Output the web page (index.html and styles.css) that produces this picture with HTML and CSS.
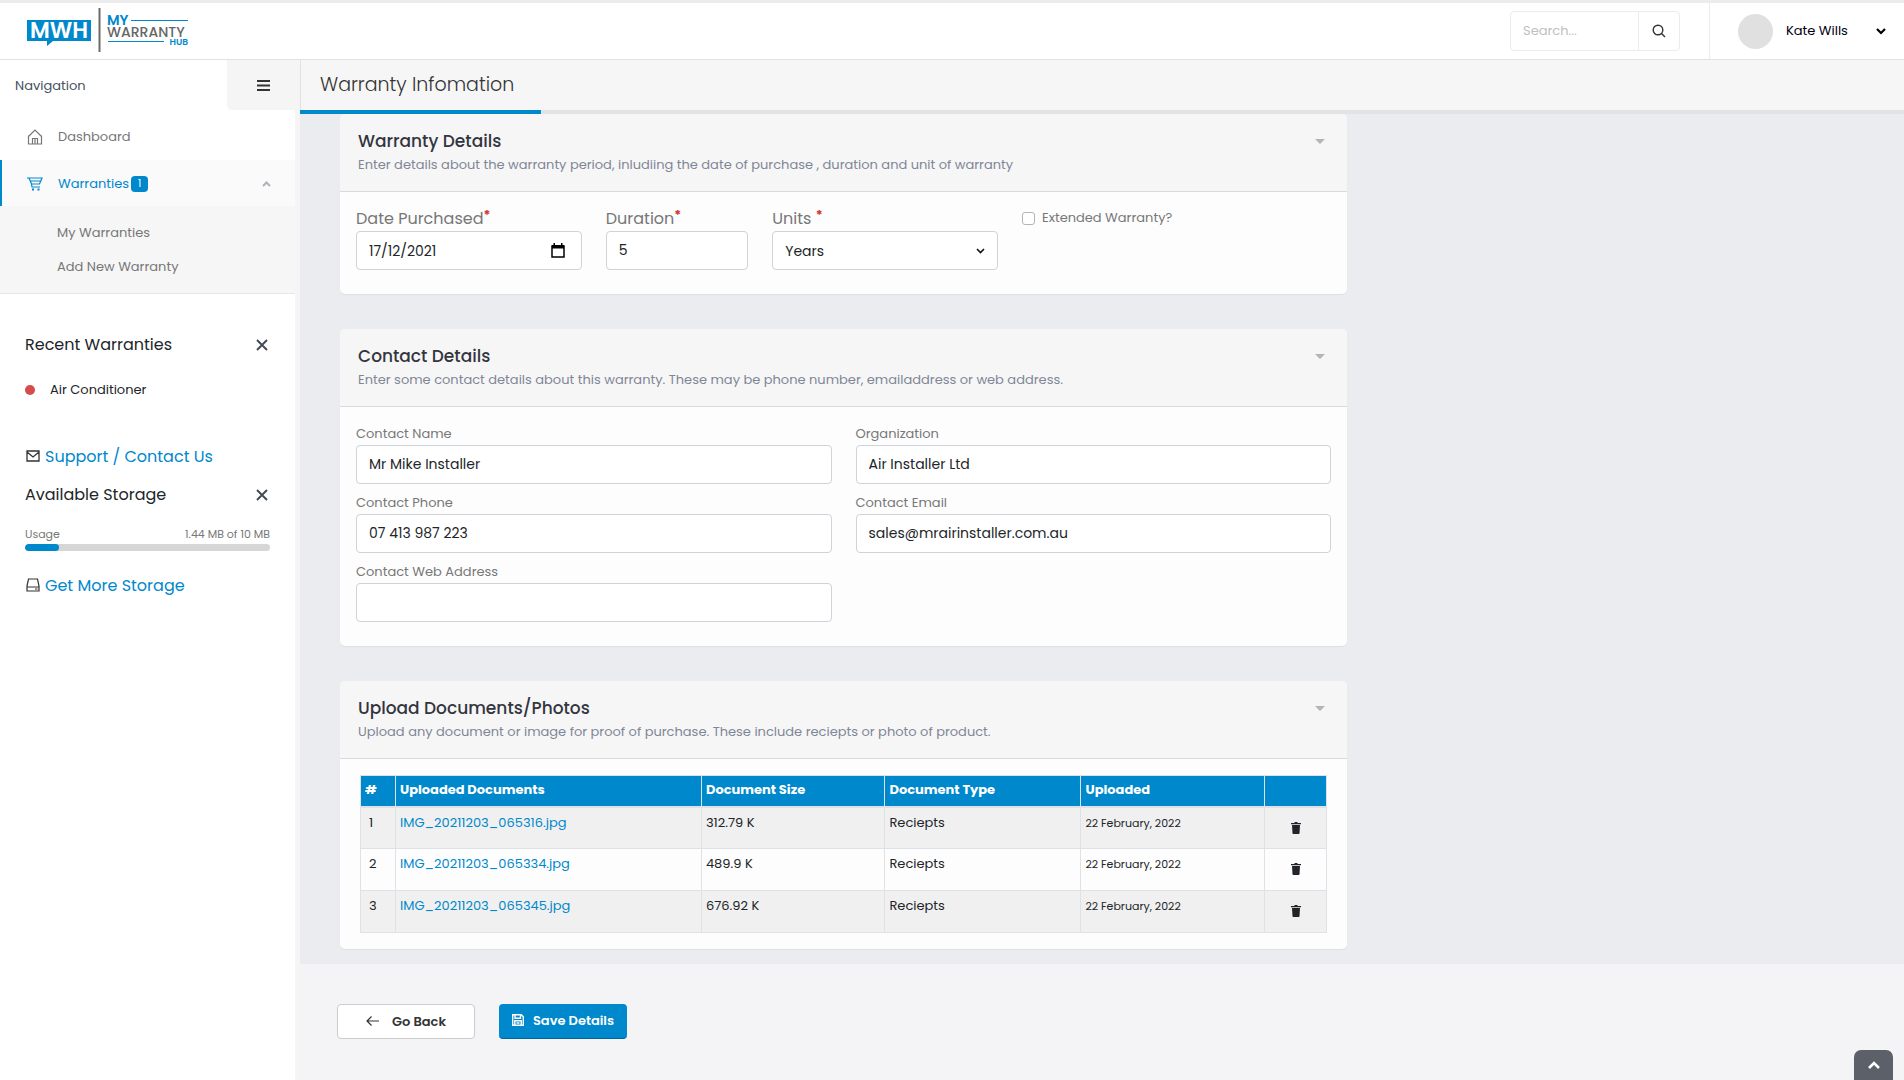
FILE: index.html
```html
<!DOCTYPE html>
<html lang="en-AU">
<head>
<meta charset="utf-8">
<title>Warranty Infomation - My Warranty Hub</title>
<meta name="viewport" content="width=device-width, initial-scale=1">
<link rel="stylesheet" href="styles.css">
</head>
<body>
<svg class="sprite" aria-hidden="true">
  <symbol id="i-close" viewBox="0 0 12 12"><path d="M1 1l10 10M11 1L1 11" fill="none" stroke="currentColor" stroke-width="2"/></symbol>
  <symbol id="i-trash" viewBox="0 0 10 12"><path d="M0 1h3l1-1h2l1 1h3v1.300H0zM1 3h8l-.5 8.200a.8.800 0 0 1-.8.800H2.300a.8.800 0 0 1-.8-.8z" fill="currentColor"/></symbol>
</svg>

<header class="topbar">
  <a class="logo" href="#" aria-label="My Warranty Hub">
    <svg width="164" height="48" viewBox="0 0 164 48">
      <path d="M1 13h64v21H27l-6 5v-5H1z" fill="#0088cc"/>
      <text class="logo-mwh" x="33" y="31" text-anchor="middle">MWH</text>
      <path d="M73.500 1v44" stroke="#6a6a6a" stroke-width="2"/>
      <text class="logo-my" x="81" y="18">MY</text>
      <path d="M105 13.500h57M82 34.500h56" stroke="#0088cc" stroke-width="1"/>
      <text class="logo-warranty" x="81" y="30">WARRANTY</text>
      <text class="logo-hub" x="162" y="38" text-anchor="end">HUB</text>
    </svg>
  </a>
  <form class="search" role="search">
    <input class="search-input" type="search" placeholder="Search..." aria-label="Search">
    <button class="search-button" type="button" aria-label="Search">
      <svg width="14" height="14" viewBox="0 0 14 14"><g fill="none" stroke="#333" stroke-width="1.400"><circle cx="6" cy="6" r="4.800"/><path d="M9.500 9.500l3.500 3.500"/></g></svg>
    </button>
  </form>
  <button class="user" type="button">
    <span class="avatar"></span>
    <span class="user-name">Kate Wills</span>
    <svg width="10" height="7" viewBox="0 0 10 7"><path d="M1 1l4 4 4-4" fill="none" stroke="#000" stroke-width="2.200"/></svg>
  </button>
</header>

<div class="layout">
  <aside class="sidebar">
    <div class="sidebar-head">
      <span class="sidebar-title">Navigation</span>
      <button class="menu-toggle" type="button" aria-label="Toggle navigation">
        <svg width="13" height="11" viewBox="0 0 13 11"><path d="M0 1h13M0 5.500h13M0 10h13" stroke="#333" stroke-width="1.800"/></svg>
      </button>
    </div>
    <div class="sidebar-body">
      <nav>
        <a class="nav-item" href="#">
          <svg width="16" height="16" viewBox="0 0 16 16"><path d="M1.500 6.500V15h13V6.500M1.500 7.500L8 1l6.500 6.500M5.500 15V9.500h5V15M8 10v5" fill="none" stroke="currentColor" stroke-width="1.200"/></svg>
          <span>Dashboard</span>
        </a>
        <a class="nav-item active" href="#">
          <svg width="16" height="16" viewBox="0 0 16 16"><g fill="none" stroke="currentColor" stroke-width="1.200"><path d="M0 2h15l-2.500 6H4.500L2 2M4.500 8L5 11h8M3.500 5h10"/></g><path d="M5 12.500h2v2H5zM10.500 12.500h2v2h-2z" fill="currentColor"/></svg>
          <span>Warranties</span>
          <span class="badge">1</span>
          <svg class="nav-caret" width="9" height="6" viewBox="0 0 9 6"><path d="M1 5l3.500-3.500L8 5" fill="none" stroke="#adb1ba" stroke-width="2"/></svg>
        </a>
        <div class="subnav">
          <a href="#">My Warranties</a>
          <a href="#">Add New Warranty</a>
        </div>
      </nav>
      <section class="widget recent">
        <div class="widget-head">
          <h2>Recent Warranties</h2>
          <button class="close" type="button" aria-label="Close recent warranties"><svg width="12" height="12"><use href="#i-close"/></svg></button>
        </div>
        <p class="recent-item"><span class="dot"></span>Air Conditioner</p>
      </section>
      <p class="side-link">
        <svg width="14" height="14" viewBox="0 0 14 14"><path d="M1 1h12v10H1zM1 2l6 5 6-5" fill="none" stroke="#333" stroke-width="1.300"/></svg>
        <a href="#">Support / Contact Us</a>
      </p>
      <section class="widget storage">
        <div class="widget-head">
          <h2>Available Storage</h2>
          <button class="close" type="button" aria-label="Close available storage"><svg width="12" height="12"><use href="#i-close"/></svg></button>
        </div>
        <div class="usage"><span>Usage</span><span>1.44 MB of 10 MB</span></div>
        <div class="meter"><div class="meter-fill" style="width:14%"></div></div>
      </section>
      <p class="side-link">
        <svg width="14" height="16" viewBox="0 0 14 16"><path d="M1 8l1.500-7h9L13 8v5H1zM1 9h12M9 11h2.500" fill="none" stroke="#333" stroke-width="1.200"/></svg>
        <a href="#">Get More Storage</a>
      </p>
    </div>
  </aside>

  <main class="main">
    <div class="page-head"><h1>Warranty Infomation</h1></div>
    <div class="progress"><div class="progress-fill" style="width:15%"></div></div>
    <form id="warranty" class="content">
      <section class="card">
        <header class="card-head">
          <div><h2>Warranty Details</h2><p>Enter details about the warranty period, inludiing the date of purchase , duration and unit of warranty</p></div>
          <button class="collapse" type="button" aria-label="Collapse warranty details"></button>
        </header>
        <div class="card-body fields">
          <div class="field large span-3">
            <label for="date">Date Purchased<span class="req">*</span></label>
            <div class="control date">
              <input id="date" type="text" value="17/12/2021">
              <button type="button" aria-label="Choose date"><svg width="14" height="15" viewBox="0 0 14 15"><path d="M1 3h12v11H1z" fill="none" stroke="#000" stroke-width="1.500"/><path d="M1 2h12v3.500H1zM2.500 0H4v3H2.500zM10 0h1.500v3H10z"/></svg></button>
            </div>
          </div>
          <div class="field large span-2">
            <label for="duration">Duration<span class="req">*</span></label>
            <input class="control" id="duration" type="text" value="5">
          </div>
          <div class="field large span-3">
            <label for="units">Units <span class="req">*</span></label>
            <div class="select">
              <select class="control" id="units"><option>Years</option><option>Months</option></select>
              <svg width="9" height="6" viewBox="0 0 9 6"><path d="M1 1l3.500 3.500L8 1" fill="none" stroke="#111" stroke-width="1.600"/></svg>
            </div>
          </div>
          <label class="check span-4"><input type="checkbox"> Extended Warranty?</label>
        </div>
      </section>

      <section class="card">
        <header class="card-head">
          <div><h2>Contact Details</h2><p>Enter some contact details about this warranty. These may be phone number, emailaddress or web address.</p></div>
          <button class="collapse" type="button" aria-label="Collapse contact details"></button>
        </header>
        <div class="card-body fields roomy">
          <div class="field span-6"><label for="name">Contact Name</label><input class="control" id="name" type="text" value="Mr Mike Installer"></div>
          <div class="field span-6"><label for="org">Organization</label><input class="control" id="org" type="text" value="Air Installer Ltd"></div>
          <div class="field span-6"><label for="phone">Contact Phone</label><input class="control" id="phone" type="tel" value="07 413 987 223"></div>
          <div class="field span-6"><label for="email">Contact Email</label><input class="control" id="email" type="email" value="sales@mrairinstaller.com.au"></div>
          <div class="field span-6"><label for="web">Contact Web Address</label><input class="control" id="web" type="text"></div>
        </div>
      </section>

      <section class="card">
        <header class="card-head">
          <div><h2>Upload Documents/Photos</h2><p>Upload any document or image for proof of purchase. These include reciepts or photo of product.</p></div>
          <button class="collapse" type="button" aria-label="Collapse upload documents"></button>
        </header>
        <div class="card-body uploads">
          <table>
            <colgroup><col class="c-num"><col class="c-doc"><col class="c-size"><col class="c-type"><col class="c-date"><col class="c-act"></colgroup>
            <thead><tr><th>#</th><th>Uploaded Documents</th><th>Document Size</th><th>Document Type</th><th>Uploaded</th><th></th></tr></thead>
            <tbody>
              <tr><td class="num">1</td><td><a href="#">IMG_20211203_065316.jpg</a></td><td>312.79 K</td><td>Reciepts</td><td class="when">22 February, 2022</td><td class="act"><button type="button" aria-label="Delete document 1"><svg width="10" height="12"><use href="#i-trash"/></svg></button></td></tr>
              <tr><td class="num">2</td><td><a href="#">IMG_20211203_065334.jpg</a></td><td>489.9 K</td><td>Reciepts</td><td class="when">22 February, 2022</td><td class="act"><button type="button" aria-label="Delete document 2"><svg width="10" height="12"><use href="#i-trash"/></svg></button></td></tr>
              <tr><td class="num">3</td><td><a href="#">IMG_20211203_065345.jpg</a></td><td>676.92 K</td><td>Reciepts</td><td class="when">22 February, 2022</td><td class="act"><button type="button" aria-label="Delete document 3"><svg width="10" height="12"><use href="#i-trash"/></svg></button></td></tr>
            </tbody>
          </table>
        </div>
      </section>
    </form>
    <div class="actions">
      <button class="btn btn-back" type="button">
        <svg width="13" height="12" viewBox="0 0 13 12"><path d="M13 5H1M5.500 .5L1 5l4.500 4.500" fill="none" stroke="currentColor" stroke-width="1.200"/></svg>
        Go Back
      </button>
      <button class="btn btn-save" type="submit" form="warranty">
        <svg width="12" height="14" viewBox="0 0 12 14"><path d="M.7.7h8.600l2 2v8.600H.7zM3 .7v3.500h5.500V.7M2.800 11V6.800h6.400V11M4.500 9h3" fill="none" stroke="currentColor" stroke-width="1.400"/></svg>
        Save Details
      </button>
    </div>
  </main>
</div>
<a class="to-top" href="#" aria-label="Back to top"><svg width="12" height="8" viewBox="0 0 12 8"><path d="M1 7l5-5 5 5" fill="none" stroke="#fff" stroke-width="2.600"/></svg></a>
</body>
</html>
```
FILE: styles.css
```css
* { box-sizing: border-box; }
body {
  margin: 0;
  min-height: 100vh;
  display: flex;
  flex-direction: column;
  background: #f4f4f6;
  color: #212529;
  font: 13px/20px Poppins, Inter, "Open Sans", sans-serif;
}
h1, h2, p { margin: 0; font-weight: 400; }
a { color: #0088cc; text-decoration: none; }
button, input, select { font: inherit; color: inherit; }
button { padding: 0; border: 0; background: none; cursor: pointer; }
svg { display: block; flex: none; }
.sprite { position: absolute; width: 0; height: 0; }

/* Top bar */
.topbar {
  display: flex;
  align-items: center;
  height: 60px;
  background: #fff;
  border-top: 3px solid #ececec;
  border-bottom: 1px solid #e2e2e2;
}
.logo { margin: 0 auto 0 26px; }
.logo text { font-family: Poppins, Lato, sans-serif; font-weight: 600; }
.logo-mwh { font-size: 22px; fill: #fff; }
.logo .logo-my { font-size: 14px; fill: #0088cc; }
.logo .logo-warranty { font-size: 14px; font-weight: 500; fill: #666; }
.logo .logo-hub { font-size: 9px; fill: #0088cc; }
.search {
  display: flex;
  width: 170px;
  height: 40px;
  margin-right: 29px;
  border: 1px solid #ececec;
  border-radius: 4px;
}
.search-input {
  flex: 1;
  min-width: 0;
  padding: 0 12px;
  border: 0;
  background: none;
  outline: 0;
}
.search-input::placeholder { color: #c0c0c0; }
.search-button {
  display: grid;
  place-items: center;
  width: 41px;
  border-left: 1px solid #ececec;
}
.user {
  display: flex;
  align-items: center;
  align-self: stretch;
  width: 195px;
  padding: 0 18px 0 28px;
  border-left: 1px solid #ececec;
  color: #000011;
}
.avatar { width: 35px; height: 35px; margin-right: 13px; border-radius: 50%; background: #e0e0e0; }
.user-name { margin-right: auto; }

/* Sidebar */
.layout { display: flex; flex: 1; }
.sidebar { flex: none; width: 300px; background: #f5f5f5; }
.sidebar-head { display: flex; height: 50px; background: #fff; }
.sidebar-title { flex: 1; padding: 16px 15px 14px; color: #465162; }
.menu-toggle {
  display: grid;
  place-items: center;
  width: 73px;
  background: #f5f5f5;
  border-bottom-left-radius: 5px;
}
.sidebar-body { width: 295px; height: calc(100% - 50px); background: #fff; }
.nav-item {
  display: flex;
  align-items: center;
  height: 46px;
  padding: 2px 24px 0 27px;
  color: #777;
}
.nav-item:first-child { height: 50px; padding-top: 3px; }
.nav-item svg:first-child { margin-right: 15px; }
.nav-item.active { padding-left: 25px; border-left: 2px solid #0088cc; background: #fafafa; color: #0088cc; }
.badge {
  margin-left: 2px;
  width: 17px;
  border-radius: 4px;
  background: #0088cc;
  color: #fff;
  font-size: 10px;
  line-height: 16px;
  text-align: center;
}
.nav-caret { margin-left: auto; }
.subnav { padding: 10px 0 9px; background: #f6f6f6; border-bottom: 1px solid #e8e8e8; }
.subnav a { display: block; padding: 7px 57px; color: #777; }
.widget { padding: 0 25px; }
.widget-head { display: flex; align-items: center; justify-content: space-between; padding-right: 2px; }
.widget h2, .side-link { font-size: 16px; line-height: 24px; }
.close { color: #444c58; }
.recent { margin-top: 39px; }
.recent-item { display: flex; align-items: center; gap: 15px; margin-top: 23px; }
.dot { width: 10px; height: 10px; border-radius: 50%; background: #d64b4b; }
.side-link { display: flex; align-items: center; gap: 5px; padding: 0 26px; }
.recent + .side-link { margin-top: 45px; }
.storage { margin-top: 14px; }
.usage { display: flex; justify-content: space-between; margin-top: 17px; color: #777; font-size: 11px; }
.meter { height: 7px; border-radius: 4px; background: #d6d6d6; overflow: hidden; }
.meter-fill { height: 100%; border-radius: 4px; background: #0088cc; }
.storage + .side-link { margin-top: 23px; }

/* Main column */
.main { flex: 1; min-width: 0; }
.page-head { height: 50px; padding: 8px 19px; border-left: 1px solid #e2e2e2; background: #f6f6f6; }
.page-head h1 { color: #333; font-size: 19px; font-weight: 300; line-height: 34px; }
.progress { height: 4px; background: #e2e3e6; }
.progress-fill { height: 100%; background: #0088cc; }
.content { display: grid; gap: 35px; padding: 0 40px 15px; background: #ebecf0; }
.card {
  width: 100%;
  max-width: 1007px;
  border-radius: 5px;
  background: #fdfdfd;
  box-shadow: 0 1px 1px rgba(0, 0, 0, .05);
}
.card-head {
  display: flex;
  justify-content: space-between;
  padding: 15px 18px;
  border-bottom: 1px solid #dadada;
  border-radius: 5px 5px 0 0;
  background: #f6f6f6;
}
.card-head h2 { font-size: 17px; font-weight: 500; line-height: 24px; color: #33353f; }
.card-head p { margin-top: 1px; line-height: 22px; color: #808697; }
.collapse {
  align-self: flex-start;
  margin: 10px 4px;
  border: 5px solid transparent;
  border-top-color: #b4b4b4;
  border-bottom: 0;
}
.fields { display: grid; grid-template-columns: repeat(12, minmax(0, 1fr)); gap: 10px 24px; padding: 15px 16px 24px; }
.roomy { padding-top: 18px; }
.span-2 { grid-column: span 2; }
.span-3 { grid-column: span 3; }
.span-4 { grid-column: span 4; }
.span-6 { grid-column: span 6; }
.field label { display: block; margin-bottom: 2px; line-height: 18px; color: #777; }
.field.large label { margin-bottom: 0; font-size: 16px; line-height: 24px; }
.req { color: #d2322d; font-weight: 700; font-size: 13px; vertical-align: 5px; line-height: 1; }
.control {
  display: block;
  width: 100%;
  height: 39px;
  padding: 0 12px;
  border: 1px solid #ced4da;
  border-radius: 4px;
  background: #fff;
  font-size: 14px;
}
.date { display: flex; align-items: center; padding-right: 16px; }
.date input { flex: 1; min-width: 0; padding: 0; border: 0; outline: 0; background: none; }
.select { display: grid; align-items: center; }
.select > * { grid-area: 1 / 1; }
.select select { appearance: none; }
.select svg { justify-self: end; margin-right: 13px; pointer-events: none; }
.check { display: flex; align-items: center; align-self: start; gap: 7px; height: 22px; color: #777; }
.check input {
  appearance: none;
  width: 13px;
  height: 13px;
  margin: 0;
  border: 1px solid #b4b4b4;
  border-radius: 3px;
  background: #fff;
}
.uploads { padding: 16px 20px; }
table { width: 100%; border-collapse: collapse; table-layout: fixed; }
.c-num { width: 35px; }
.c-size { width: 19%; }
.c-type { width: 196px; }
.c-date { width: 19%; }
.c-act { width: 62px; }
th, td { border: 1px solid #dee2e6; padding: 4px; text-align: left; vertical-align: top; }
th { height: 31px; background: #0088cc; color: #fff; font-weight: 700; border-bottom: 2px solid #dee2e6; }
td { height: 42px; padding-top: 5px; }
tbody tr:nth-child(odd) { background: #f0f0f0; }
.num { padding-left: 8px; }
.when { font-size: 11px; }
.act { padding-top: 14px; text-align: center; line-height: 0; }
.actions { display: flex; gap: 24px; padding: 40px 37px 32px; }
.btn {
  display: flex;
  align-items: center;
  justify-content: center;
  height: 35px;
  border-radius: 4px;
  font-weight: 600;
}
.btn-back { gap: 13px; width: 138px; border: 1px solid #ccc; background: #fff; color: #333; }
.btn-save { gap: 9px; width: 128px; border-bottom: 1px solid #006699; background: #0088cc; color: #fff; }
.to-top {
  position: fixed;
  right: 11px;
  bottom: 0;
  display: grid;
  place-items: center;
  width: 39px;
  height: 30px;
  border-radius: 7px 7px 0 0;
  background: #5b6069;
}
```
